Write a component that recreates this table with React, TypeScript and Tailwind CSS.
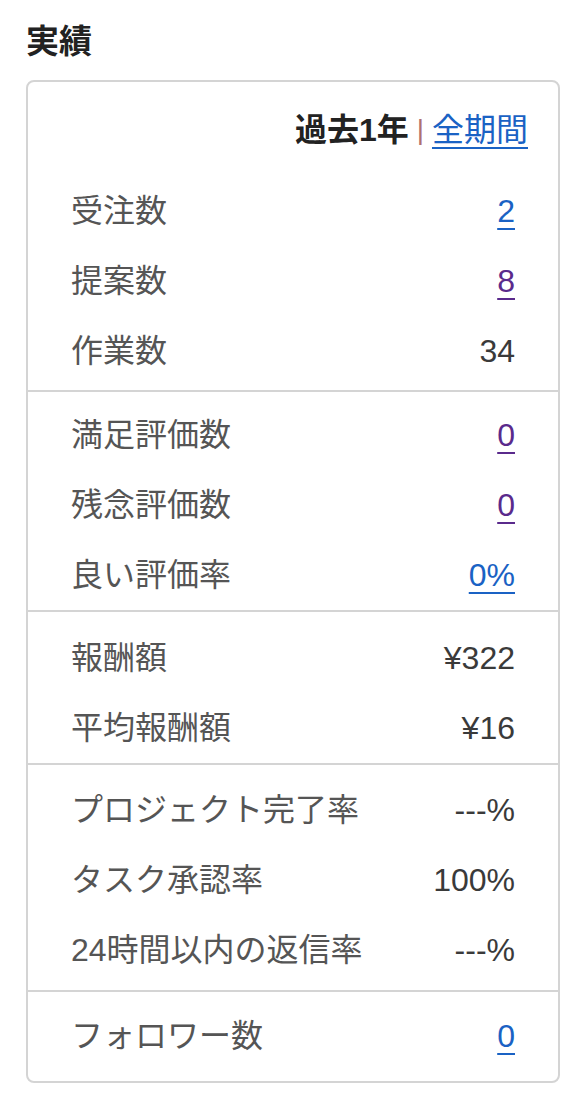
import React from "react";

type Row = {
  label: string;
  value: string;
  link?: "blue" | "purple";
};

const sections: { rows: Row[]; className: string }[] = [
  {
    className: "pt-[26px] pb-[4px]",
    rows: [
      { label: "受注数", value: "2", link: "blue" },
      { label: "提案数", value: "8", link: "purple" },
      { label: "作業数", value: "34" },
    ],
  },
  {
    className: "pt-[8px]",
    rows: [
      { label: "満足評価数", value: "0", link: "purple" },
      { label: "残念評価数", value: "0", link: "purple" },
      { label: "良い評価率", value: "0%", link: "blue" },
    ],
  },
  {
    className: "pt-[11px]",
    rows: [
      { label: "報酬額", value: "¥322" },
      { label: "平均報酬額", value: "¥16" },
    ],
  },
  {
    className: "pt-[10px] pb-[5px]",
    rows: [
      { label: "プロジェクト完了率", value: "---%" },
      { label: "タスク承認率", value: "100%" },
      { label: "24時間以内の返信率", value: "---%" },
    ],
  },
  {
    className: "pt-[9px] pb-[10px]",
    rows: [{ label: "フォロワー数", value: "0", link: "blue" }],
  },
];

const StatRow = ({ row }: { row: Row }) => (
  <div className="flex h-[70px] items-center justify-between pl-[43px] pr-[43px]">
    <span className="text-[#555]">{row.label}</span>
    {row.link ? (
      <a
        href="#"
        className={
          row.link === "blue"
            ? "text-[#1a62c4] underline decoration-2 underline-offset-[6px]"
            : "text-[#5a2a8c] underline decoration-2 underline-offset-[6px]"
        }
      >
        {row.value}
      </a>
    ) : (
      <span className="text-[#3a3a3a]">{row.value}</span>
    )}
  </div>
);

export default function App() {
  return (
    <div
      className="min-h-screen bg-white px-[26px] pt-[22px] text-[32px] leading-none"
      style={{ fontFamily: '"Liberation Sans", "Noto Sans CJK JP", sans-serif' }}
    >
      <h2 className="h-[40px] pl-[0px] text-[33px] font-bold leading-[40px] text-[#222]">
        実績
      </h2>

      <div className="mt-[18px] rounded-[8px] border-2 border-[#d4d4d4]">
        {/* period switch */}
        <div className="flex h-[40px] items-center justify-end pt-0 pr-[30px] mt-[28px]">
          <span className="font-bold text-[#222]">過去1年</span>
          <span className="mx-[8px] text-[28px] text-[#b07070]">|</span>
          <a
            href="#"
            className="text-[#1a62c4] underline decoration-2 underline-offset-[6px]"
          >
            全期間
          </a>
        </div>

        {sections.map((section, i) => (
          <div
            key={i}
            className={
              section.className +
              (i < sections.length - 1 ? " border-b-2 border-[#d4d4d4]" : "")
            }
          >
            {section.rows.map((row) => (
              <StatRow key={row.label} row={row} />
            ))}
          </div>
        ))}
      </div>
    </div>
  );
}
